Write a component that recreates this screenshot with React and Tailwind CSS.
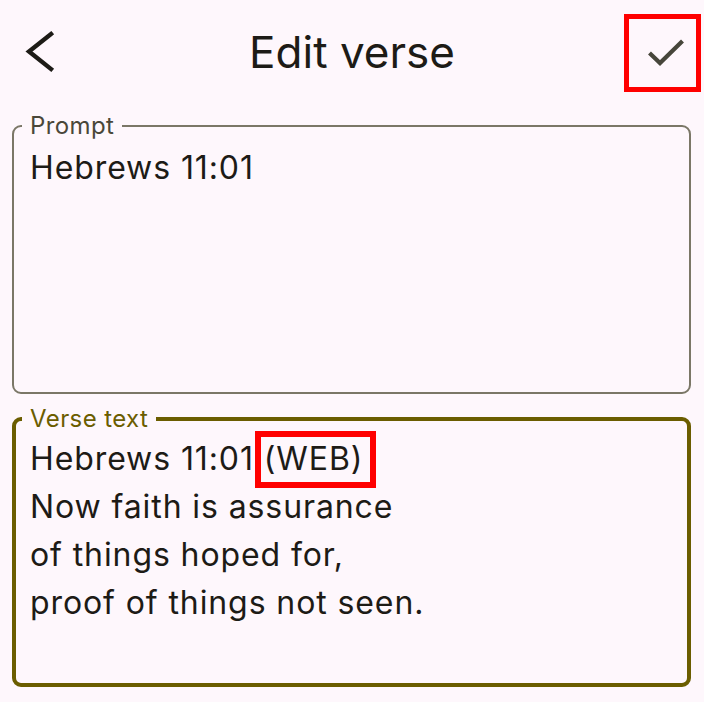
import React from "react";

const Field = ({ label, focused, children }) => (
  <fieldset
    className={`h-[282px] rounded-[9px] ${
      focused ? "border-4 border-[#6b5d00] pl-1.5" : "border-2 border-[#7b7767] pl-2"
    } pr-2`}
  >
    <legend
      className={`px-2 text-[24px] leading-[28px] tracking-[0.4px] ${
        focused ? "text-[#6b5d00]" : "text-[#4a4739]"
      }`}
    >
      {label}
    </legend>
    <div
      className={`pl-2 text-[32px] leading-[48px] tracking-[0.9px] text-[#1d1b16] ${
        focused ? "pt-[2px]" : "pt-1"
      }`}
    >
      {children}
    </div>
  </fieldset>
);

export default function App() {
  return (
    <div
      className="w-[704px] h-[702px] bg-[#fef7fc] overflow-hidden"
      style={{ fontFamily: "Inter, Roboto, 'Noto Sans', sans-serif" }}
    >
      {/* top bar */}
      <div className="flex items-center h-[104px]">
        <div className="w-[90px] h-[104px]">
          <svg width="90" height="104" viewBox="0 0 90 104">
            <polyline
              points="51,34 29,51.5 51,69"
              fill="none"
              stroke="#1d1b16"
              strokeWidth="4.4"
              strokeLinecap="square"
            />
          </svg>
        </div>
        <div className="flex-1 text-center text-[44px] leading-none text-[#1d1b16]">
          Edit verse
        </div>
        <div className="relative w-[90px] h-[104px]">
          <svg width="90" height="104" viewBox="0 0 90 104">
            <polyline
              points="35.5,53 46,63 68.5,41"
              fill="none"
              stroke="#47463b"
              strokeWidth="4.2"
            />
          </svg>
          <div className="absolute left-[10px] top-[14px] w-[77px] h-[78px] border-[5px] border-[#ff0000]" />
        </div>
      </div>

      <div className="flex flex-col gap-[11px] pl-3 pr-[13px] mt-2">
        <Field label="Prompt">Hebrews 11:01</Field>
        <Field label="Verse text" focused>
          <div>
            Hebrews 11:01{" "}
            <span className="relative">
              (WEB)
              <span className="absolute left-[-9px] right-[-13px] top-[-8px] bottom-[-10px] border-[6px] border-[#ff0000]" />
            </span>
          </div>
          <div>Now faith is assurance</div>
          <div>of things hoped for,</div>
          <div>proof of things not seen.</div>
        </Field>
      </div>
    </div>
  );
}
